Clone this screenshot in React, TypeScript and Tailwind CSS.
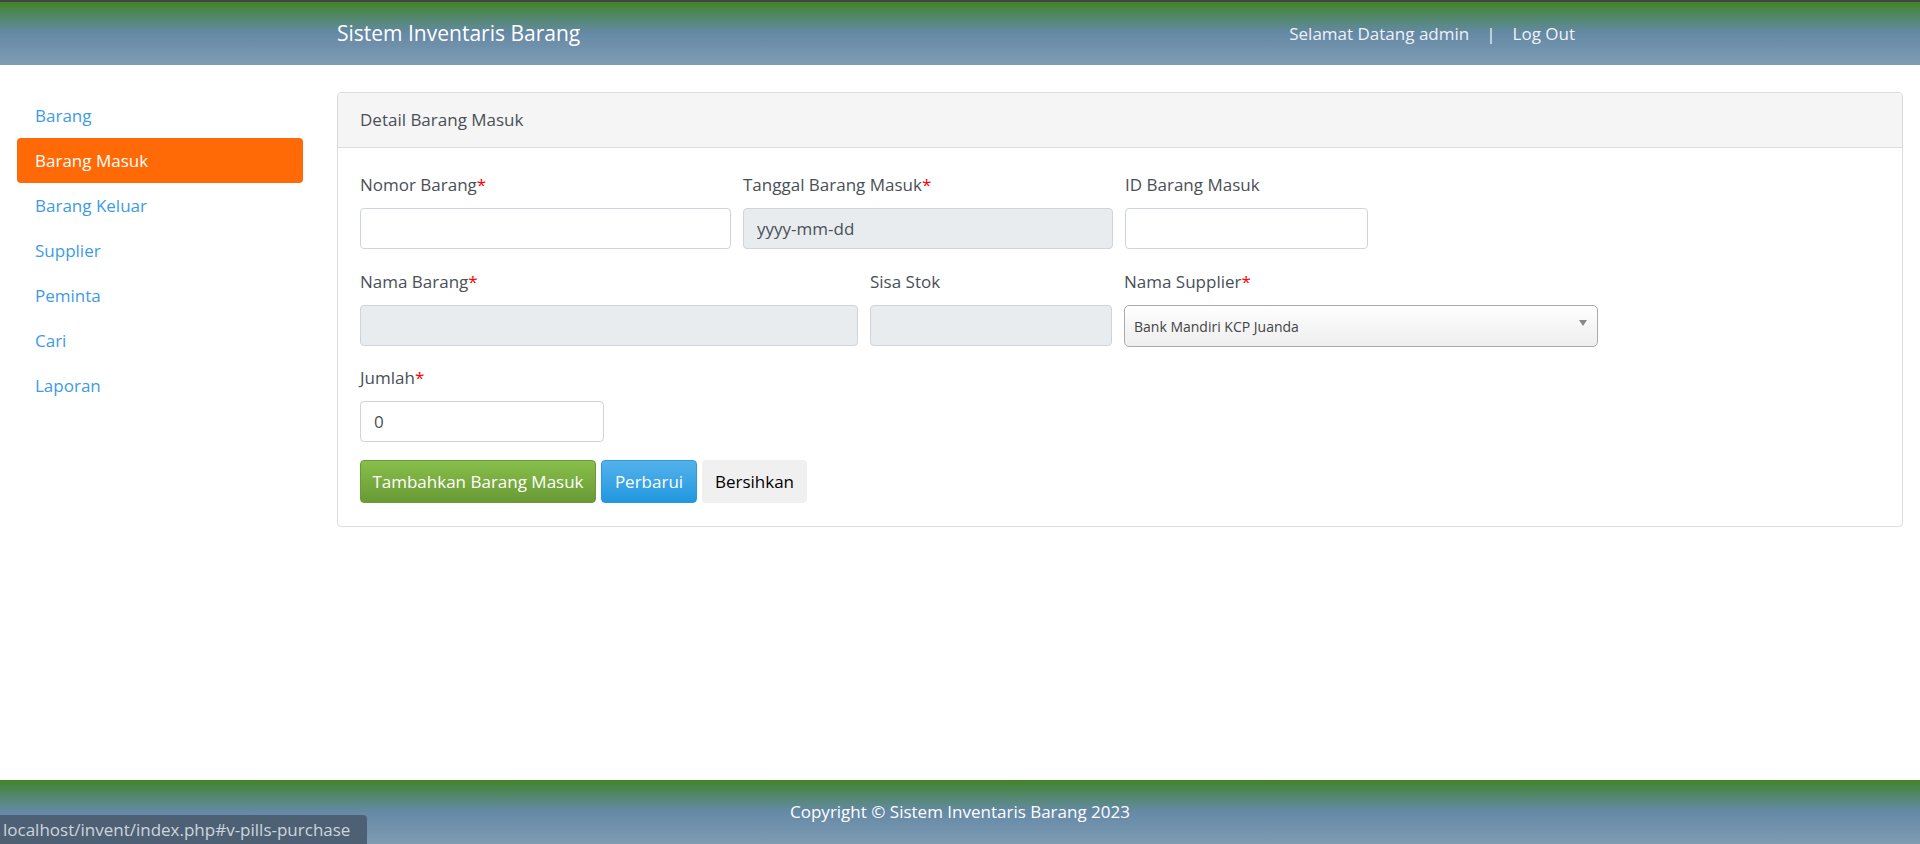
import { useState } from 'react';

const menu = ['Barang', 'Barang Masuk', 'Barang Keluar', 'Supplier', 'Peminta', 'Cari', 'Laporan'];

const Label = ({ text, required }: { text: string; required?: boolean }) => (
    <label className="block h-[26px] leading-[26px] mb-[10px] text-[17px] text-[#495057]">
        {text}
        {required && <span className="text-[#ff0000]">*</span>}
    </label>
);

const inputBase = 'block w-full h-[41px] rounded-[4px] border border-[#ced4da] px-[13px] text-[17px] text-[#495057] outline-none';

const App = () => {
    const [active, setActive] = useState('Barang Masuk');
    const [jumlah, setJumlah] = useState('0');

    return (
        <div className="min-h-[844px] flex flex-col bg-white font-['Open_Sans',sans-serif] relative">
            {/* Header */}
            <header className="h-[65px] border-t-2 border-[#444444] bg-gradient-to-b from-[#43831f] via-[#6589a6] to-[#7f9cb3] flex items-center">
                <div className="w-[320px]" />
                <div className="flex-1 flex items-center pl-[17px] pr-[345px]">
                    <span className="text-white text-[21px]">Sistem Inventaris Barang</span>
                    <div className="ml-auto flex items-center text-[#eef2f5] text-[17px]">
                        <span>Selamat Datang admin</span>
                        <span className="mx-[17px]">|</span>
                        <span>Log Out</span>
                    </div>
                </div>
            </header>

            {/* Body */}
            <div className="flex flex-1 pt-[28px]">
                <aside className="w-[320px] px-[17px]">
                    <nav className="flex flex-col">
                        {menu.map(item => (
                            <a
                                key={item}
                                href="#"
                                onClick={e => {
                                    e.preventDefault();
                                    setActive(item);
                                }}
                                className={
                                    item === active
                                        ? 'h-[45px] flex items-center px-[18px] rounded-[4px] bg-[#ff6a06] text-white text-[17px]'
                                        : 'h-[45px] flex items-center px-[18px] rounded-[4px] text-[#3d9be6] text-[17px]'
                                }
                            >
                                {item}
                            </a>
                        ))}
                    </nav>
                </aside>

                <main className="flex-1 px-[17px]">
                    <div className="rounded-[4px] border border-[#dcdcdc] mt-[-1px]">
                        <div className="h-[55px] flex items-center px-[22px] bg-[#f5f5f5] border-b border-[#dcdcdc] rounded-t-[4px] text-[17px] text-[#495057]">
                            Detail Barang Masuk
                        </div>
                        <div className="px-[22px] pt-[24px] pb-[23px]">
                            {/* Row 1 */}
                            <div className="flex gap-[12px] mb-[20px]">
                                <div className="w-[371px]">
                                    <Label text="Nomor Barang" required />
                                    <input className={inputBase + ' bg-white'} />
                                </div>
                                <div className="w-[370px]">
                                    <Label text="Tanggal Barang Masuk" required />
                                    <input className={inputBase + ' bg-[#e9ecef]'} value="yyyy-mm-dd" readOnly />
                                </div>
                                <div className="w-[243px]">
                                    <Label text="ID Barang Masuk" />
                                    <input className={inputBase + ' bg-white'} />
                                </div>
                            </div>

                            {/* Row 2 */}
                            <div className="flex gap-[12px] mb-[18px]">
                                <div className="w-[498px]">
                                    <Label text="Nama Barang" required />
                                    <input className={inputBase + ' bg-[#e9ecef]'} readOnly />
                                </div>
                                <div className="w-[242px]">
                                    <Label text="Sisa Stok" />
                                    <input className={inputBase + ' bg-[#e9ecef]'} readOnly />
                                </div>
                                <div className="w-[474px]">
                                    <Label text="Nama Supplier" required />
                                    <div className="relative h-[42px] rounded-[5px] border border-[#aaaaaa] bg-gradient-to-b from-white via-[#f6f6f6] to-[#eeeeee] flex items-center pl-[9px] text-[14px] text-[#444444]">
                                        Bank Mandiri KCP Juanda
                                        <span className="absolute right-[10px] top-[14px] w-0 h-0 border-l-[4px] border-r-[4px] border-t-[6px] border-l-transparent border-r-transparent border-t-[#888888]" />
                                    </div>
                                </div>
                            </div>

                            {/* Row 3 */}
                            <div className="w-[244px] mb-[18px]">
                                <Label text="Jumlah" required />
                                <input
                                    className={inputBase + ' bg-white'}
                                    value={jumlah}
                                    onChange={e => setJumlah(e.target.value)}
                                />
                            </div>

                            {/* Buttons */}
                            <div className="flex gap-[5px]">
                                <button className="h-[43px] w-[236px] rounded-[4px] border border-[#6a9a36] bg-gradient-to-b from-[#88bf4b] to-[#699a34] text-white text-[17px]">
                                    Tambahkan Barang Masuk
                                </button>
                                <button className="h-[43px] w-[96px] rounded-[4px] border border-[#2a9ae0] bg-gradient-to-b from-[#52b2ea] to-[#1e97e0] text-white text-[17px]">
                                    Perbarui
                                </button>
                                <button className="h-[43px] w-[105px] rounded-[4px] bg-[#f0f0f0] text-black text-[17px]">
                                    Bersihkan
                                </button>
                            </div>
                        </div>
                    </div>
                </main>
            </div>

            {/* Footer */}
            <footer className="h-[64px] bg-gradient-to-b from-[#43831f] via-[#6589a6] to-[#7f9cb3] flex items-center justify-center text-white text-[17px]">
                Copyright © Sistem Inventaris Barang 2023
            </footer>

            {/* Browser status bubble */}
            <div className="absolute left-0 bottom-0 h-[29px] w-[367px] rounded-tr-[4px] bg-[#4e6174] flex items-center pl-[3px] text-[17px] text-[#cdd5dc]">
                localhost/invent/index.php#v-pills-purchase
            </div>
        </div>
    );
};

export default App;
